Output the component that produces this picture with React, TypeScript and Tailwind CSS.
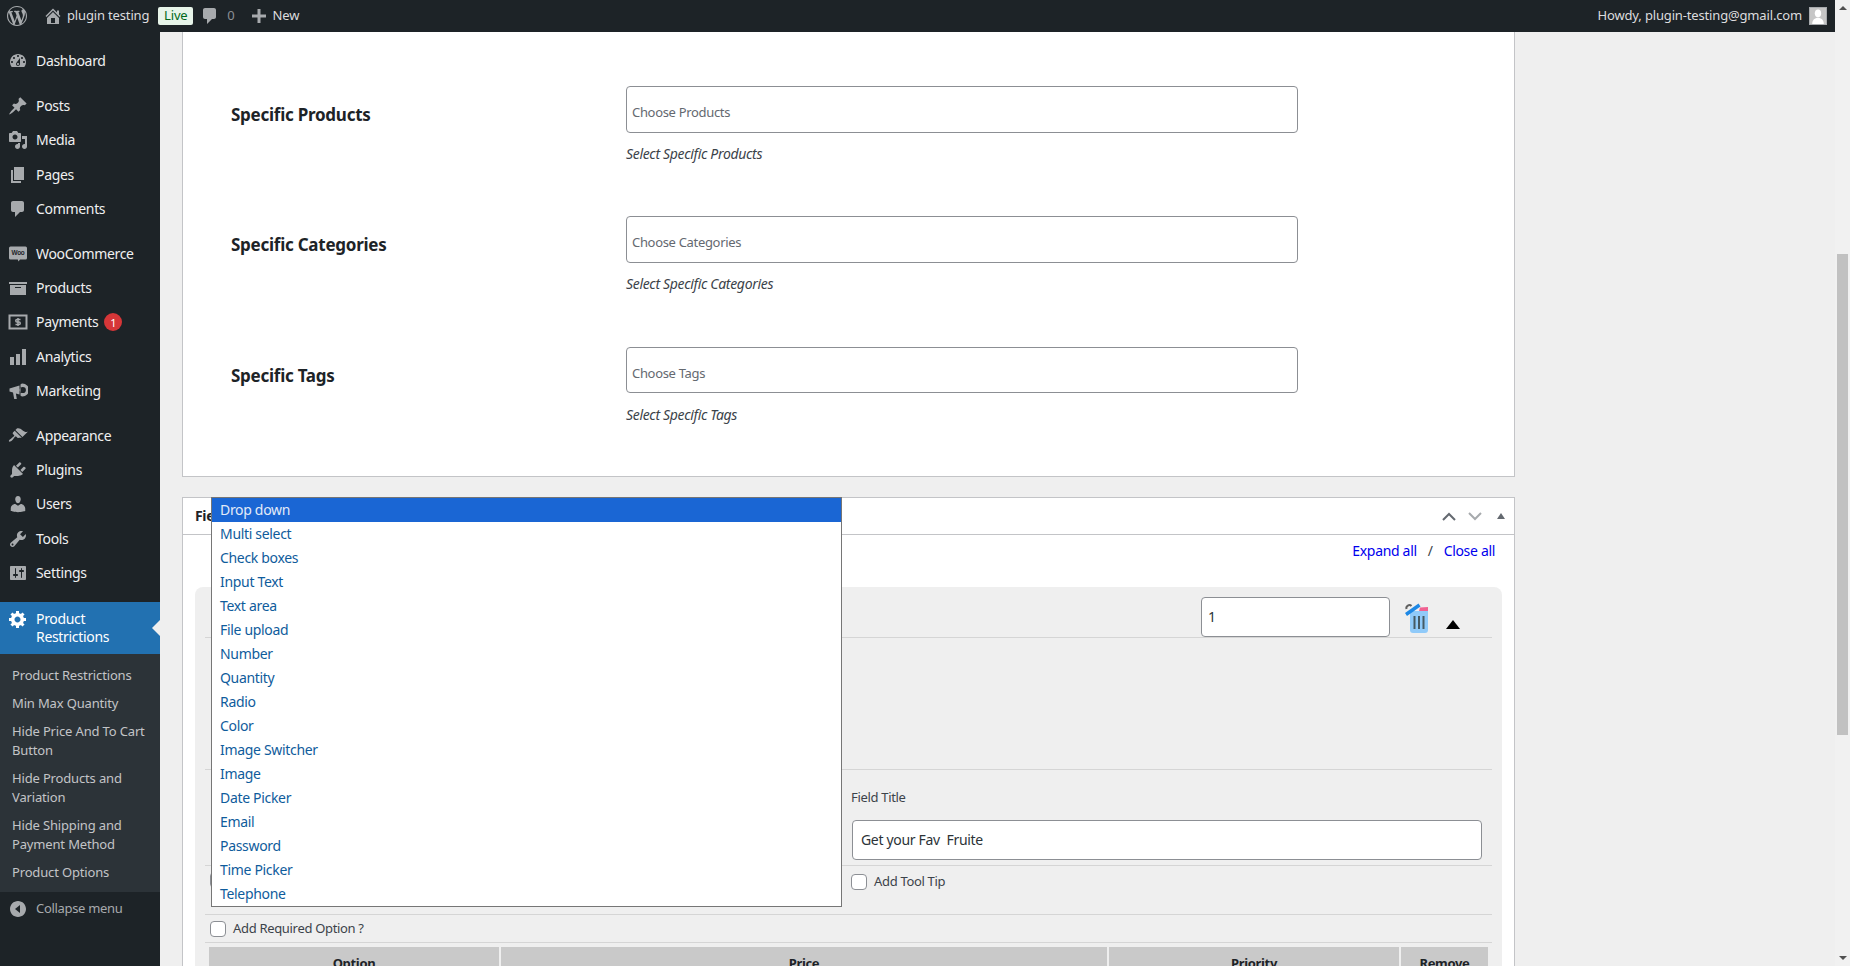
import type { ReactNode } from 'react';

const paths: Record<string, string> = {
  wp: 'M20 10c0-5.51-4.49-10-10-10C4.48 0 0 4.49 0 10c0 5.52 4.48 10 10 10 5.51 0 10-4.48 10-10zM7.78 15.37L4.37 6.22c.55-.02 1.17-.08 1.17-.08.5-.06.44-1.13-.06-1.11 0 0-1.45.11-2.37.11-.18 0-.37 0-.58-.01C4.12 2.69 6.87 1.11 10 1.11c2.33 0 4.45.87 6.05 2.34-.68-.11-1.65.39-1.65 1.58 0 .74.45 1.36.9 2.1.35.61.55 1.36.55 2.46 0 1.49-1.4 5-1.4 5l-3.03-8.37c.54-.02.82-.17.82-.17.5-.05.44-1.25-.06-1.22 0 0-1.44.12-2.38.12-.87 0-2.33-.12-2.33-.12-.5-.03-.56 1.2-.06 1.22l.92.08 1.26 3.41zM17.41 10c.24-.64.74-1.87.43-4.25.7 1.29 1.05 2.71 1.05 4.25 0 3.29-1.73 6.24-4.4 7.78.97-2.59 1.94-5.2 2.92-7.78zM6.1 18.09C3.12 16.65 1.11 13.53 1.11 10c0-1.3.23-2.48.72-3.59C3.25 10.3 4.67 14.2 6.1 18.09zm4.03-6.63l2.58 6.98c-.86.29-1.76.45-2.71.45-.79 0-1.57-.11-2.29-.33.81-2.38 1.62-4.74 2.42-7.1z',
  home: 'M16 8.5l1.53 1.53-1.06 1.06L10 4.62l-6.47 6.47-1.06-1.06L10 2.5l4 4v-2h2v4zm-6-2.46l6 5.99V18H4v-5.97zM12 17v-5H8v5h4z',
  comment: 'M5 2h9c1.1 0 2 .9 2 2v7c0 1.1-.9 2-2 2h-2l-5 5v-5H5c-1.1 0-2-.9-2-2V4c0-1.1.9-2 2-2z',
  plus: 'M17 8.5v3h-5.5V17h-3v-5.5H3v-3h5.5V3h3v5.5z',
  dashboard: 'M3.76 16h12.48c1.1-1.37 1.76-3.11 1.76-5 0-4.42-3.58-8-8-8s-8 3.58-8 8c0 1.89.66 3.63 1.76 5zM10 4c.55 0 1 .45 1 1s-.45 1-1 1-1-.45-1-1 .45-1 1-1zM6 6c.55 0 1 .45 1 1s-.45 1-1 1-1-.45-1-1 .45-1 1-1zm8 0c.55 0 1 .45 1 1s-.45 1-1 1-1-.45-1-1 .45-1 1-1zm-5.37 5.55L12 7v6c0 1.1-.9 2-2 2s-2-.9-2-2c0-.57.24-1.08.63-1.45zM4 10c.55 0 1 .45 1 1s-.45 1-1 1-1-.45-1-1 .45-1 1-1zm12 0c.55 0 1 .45 1 1s-.45 1-1 1-1-.45-1-1 .45-1 1-1zm-5 3c0-.55-.45-1-1-1s-1 .45-1 1 .45 1 1 1 1-.45 1-1z',
  post: 'M10.44 3.02l1.82-1.82 6.36 6.35-1.83 1.82c-1.05-.68-2.48-.57-3.41.36l-.75.75c-.92.93-1.04 2.35-.35 3.41l-1.83 1.82-2.41-2.41-2.8 2.79c-.42.42-3.38 2.71-3.8 2.29s1.86-3.39 2.28-3.81l2.79-2.79L4.1 9.36l1.83-1.82c1.05.69 2.48.57 3.41-.36l.75-.75c.93-.92 1.05-2.35.35-3.41z',
  media: 'M13 11V4c0-.55-.45-1-1-1h-1.67L9 1H5L3.67 3H2c-.55 0-1 .45-1 1v7c0 .55.45 1 1 1h10c.55 0 1-.45 1-1zM7 4.5c1.38 0 2.5 1.12 2.5 2.5S8.38 9.5 7 9.5 4.5 8.38 4.5 7 5.62 4.5 7 4.5zM14 6h5v10.5c0 1.38-1.12 2.5-2.5 2.5S14 17.88 14 16.5s1.12-2.5 2.5-2.5c.17 0 .34.02.5.05V9h-3V6zm-4 8.05V13h2v3.5c0 1.38-1.12 2.5-2.5 2.5S7 17.88 7 16.5 8.12 14 9.5 14c.17 0 .34.02.5.05z',
  page: 'M6 15V2h10v13H6zm-1 1h8v2H3V5h2v11z',
  archive: 'M19 4v2H1V4h18zM2 7h16v10H2V7zm11 3V9H7v1h6z',
  bars: 'M18 18V2h-4v16h4zm-6 0V7H8v11h4zm-6 0v-8H2v8h4z',
  megaphone: 'M1.5 7.5 11.5 4.5v9l-3.6-1 .9 5.5H6.2L5 11.5l-3.5-1zM14.5 2.5a6.5 6.5 0 0 1 0 13 3 3 0 0 1-2-1V3.5a3 3 0 0 1 2-1zm.3 3.4a3.1 3.1 0 1 0 0 6.2 3.1 3.1 0 0 0 0-6.2z',
  appearance: 'M14.48 11.06L7.41 3.99l1.5-1.5c.5-.56 2.3-.47 3.51.32 1.21.8 1.43 1.28 2.91 2.1 1.18.64 2.45 1.26 4.45.85zm-.71.71L6.7 4.7 4.93 6.47c-.39.39-.39 1.02 0 1.41l1.06 1.06c.39.39.39 1.03 0 1.42-.6.6-1.43 1.11-2.21 1.69-.35.26-.7.53-1.01.84C1.43 13.23.4 14.95 1.02 15.56c.54.53 2.33-.48 3.43-1.58.31-.31.58-.66.84-1.02.57-.78 1.09-1.61 1.69-2.21.39-.39 1.02-.39 1.41 0l1.06 1.06c.39.39 1.02.39 1.41 0z',
  plugins: 'M13.11 4.36L9.87 7.6 8 5.73l3.24-3.24c.35-.34 1.05-.2 1.56.32.52.51.66 1.21.31 1.55zm-8 1.77l.91-1.12 9.01 9.01-1.19.84c-.71.71-2.63 1.16-3.82 1.16H6.14L4.9 17.26c-.59.59-1.54.59-2.12 0-.59-.58-.59-1.53 0-2.12l1.24-1.24v-3.88c0-1.13.4-3.19 1.09-3.89zm7.26 3.97l3.24-3.24c.34-.35 1.04-.21 1.55.31.52.51.66 1.21.31 1.55l-3.24 3.25z',
  users: 'M10 9.25c-2.27 0-2.73-3.44-2.73-3.44C7 4.02 7.82 2 9.97 2c2.16 0 2.98 2.02 2.71 3.81 0 0-.41 3.44-2.68 3.44zm0 2.57L12.72 10c2.39 0 4.52 2.33 4.52 4.53v2.49s-3.65 1.13-7.24 1.13c-3.65 0-7.24-1.13-7.24-1.13v-2.49c0-2.25 1.94-4.48 4.47-4.48z',
  tools: 'M16.68 9.77c-1.34 1.34-3.3 1.67-4.95.99l-5.41 6.52c-.99.99-2.59.99-3.58 0s-.99-2.59 0-3.57l6.52-5.42c-.68-1.65-.35-3.61.99-4.95 1.28-1.28 3.12-1.62 4.72-1.06l-2.89 2.89 2.82 2.82 2.86-2.87c.53 1.58.18 3.39-1.08 4.65zM3.81 16.21c.4.39 1.04.39 1.43 0 .4-.4.4-1.04 0-1.43-.39-.4-1.03-.4-1.43 0-.39.39-.39 1.03 0 1.43z',
  settings: 'M18 16V4c0-.55-.45-1-1-1H3c-.55 0-1 .45-1 1v12c0 .55.45 1 1 1h14c.55 0 1-.45 1-1zM8 11h1c.55 0 1 .45 1 1s-.45 1-1 1H8v1.5c0 .28-.22.5-.5.5s-.5-.22-.5-.5V13H6c-.55 0-1-.45-1-1s.45-1 1-1h1V5.5c0-.28.22-.5.5-.5s.5.22.5.5V11zm5-2h-1c-.55 0-1-.45-1-1s.45-1 1-1h1V5.5c0-.28.22-.5.5-.5s.5.22.5.5V7h1c.55 0 1 .45 1 1s-.45 1-1 1h-1v5.5c0 .28-.22.5-.5.5s-.5-.22-.5-.5V9z',
  generic: 'M18 12h-2.18c-.17.7-.44 1.35-.81 1.93l1.54 1.54-2.1 2.1-1.54-1.54c-.58.36-1.23.63-1.91.79V19H8v-2.18c-.68-.16-1.33-.43-1.91-.79l-1.54 1.54-2.12-2.12 1.54-1.54c-.36-.58-.63-1.23-.79-1.91H1V9.03h2.17c.16-.7.44-1.35.8-1.94L2.43 5.55l2.1-2.1 1.54 1.54c.58-.37 1.24-.64 1.93-.81V2h3v2.18c.68.16 1.33.43 1.91.79l1.54-1.54 2.12 2.12-1.54 1.54c.36.59.64 1.24.8 1.94H18V12zm-8.5 1.5c1.66 0 3-1.34 3-3s-1.34-3-3-3-3 1.34-3 3 1.34 3 3 3z',
  collapse: 'M10 2c4.42 0 8 3.58 8 8s-3.58 8-8 8-8-3.58-8-8 3.58-8 8-8zm2 4l-5 4 5 4z',
};

const Dash = ({ name, className }: { name: string; className?: string }) => (
  <svg viewBox="0 0 20 20" className={className} fill="currentColor">
    <path d={paths[name]} />
  </svg>
);

const WooIcon = () => (
  <svg viewBox="0 0 20 20" className="w-5 h-5 text-[#a7aaad]">
    <path d="M2.5 2.5h15a1.5 1.5 0 0 1 1.5 1.5v10a1.5 1.5 0 0 1-1.5 1.5H12l-1.5 2-.7-2H2.5A1.5 1.5 0 0 1 1 14V4a1.5 1.5 0 0 1 1.5-1.5z" fill="currentColor" />
    <text x="10" y="11.2" textAnchor="middle" fontSize="6.4" fontWeight="700" fontFamily="Liberation Sans, sans-serif" fill="#1d2327">Woo</text>
  </svg>
);

const PaymentsIcon = () => (
  <svg viewBox="0 0 20 20" className="w-5 h-5 text-[#a7aaad]" fill="none" stroke="currentColor">
    <rect x="1.5" y="3.5" width="17" height="13" strokeWidth="2" />
    <path d="M12.5 7.5H9a1.25 1.25 0 0 0 0 2.5h2a1.25 1.25 0 0 1 0 2.5H7.5M10 6v8" strokeWidth="1.5" />
  </svg>
);

type NavItem = { label: string; icon: ReactNode; gap?: boolean; badge?: string };

const di = (name: string) => <Dash name={name} className="w-5 h-5 text-[#a7aaad]" />;

const nav: NavItem[] = [
  { label: 'Dashboard', icon: di('dashboard') },
  { label: 'Posts', icon: di('post'), gap: true },
  { label: 'Media', icon: di('media') },
  { label: 'Pages', icon: di('page') },
  { label: 'Comments', icon: di('comment') },
  { label: 'WooCommerce', icon: <WooIcon />, gap: true },
  { label: 'Products', icon: di('archive') },
  { label: 'Payments', icon: <PaymentsIcon />, badge: '1' },
  { label: 'Analytics', icon: di('bars') },
  { label: 'Marketing', icon: di('megaphone') },
  { label: 'Appearance', icon: di('appearance'), gap: true },
  { label: 'Plugins', icon: di('plugins') },
  { label: 'Users', icon: di('users') },
  { label: 'Tools', icon: di('tools') },
  { label: 'Settings', icon: di('settings') },
];

const subItems = [
  'Product Restrictions',
  'Min Max Quantity',
  'Hide Price And To Cart Button',
  'Hide Products and Variation',
  'Hide Shipping and Payment Method',
  'Product Options',
];

const specifics = [
  { label: 'Specific Products', placeholder: 'Choose Products', hint: 'Select Specific Products' },
  { label: 'Specific Categories', placeholder: 'Choose Categories', hint: 'Select Specific Categories' },
  { label: 'Specific Tags', placeholder: 'Choose Tags', hint: 'Select Specific Tags' },
];

const fieldTypes = [
  'Drop down', 'Multi select', 'Check boxes', 'Input Text', 'Text area', 'File upload', 'Number', 'Quantity', 'Radio',
  'Color', 'Image Switcher', 'Image', 'Date Picker', 'Email', 'Password', 'Time Picker', 'Telephone',
];

const Checkbox = () => <span className="block w-4 h-4 shrink-0 rounded-[4px] border border-[#8c8f94] bg-white" />;

const TopBar = () => (
  <header className="h-8 shrink-0 bg-[#1d2327] flex items-center text-[13px] tracking-[-0.012em] text-[#dcdcde]">
    <Dash name="wp" className="w-5 h-5 ml-[7px] text-[#a7aaad]" />
    <Dash name="home" className="w-5 h-5 ml-[16px] text-[#a7aaad]" />
    <span className="ml-[4px]">plugin testing</span>
    <span className="ml-[9px] h-[18px] w-[35px] rounded-[2px] bg-[#e7f4e9] text-[#00691a] flex items-center justify-center">Live</span>
    <Dash name="comment" className="w-5 h-5 ml-[7px] text-[#a7aaad]" />
    <span className="ml-[7px] text-[#8c8f94]">0</span>
    <Dash name="plus" className="w-5 h-5 ml-[14px] text-[#a7aaad]" />
    <span className="ml-[4px]">New</span>
    <span className="ml-auto">Howdy, plugin-testing@gmail.com</span>
    <span className="ml-[7px] mr-2 w-[18px] h-[18px] bg-[#c6c6c6] border border-[#a7aaad] overflow-hidden">
      <svg viewBox="0 0 18 18" className="w-full h-full" fill="#fff">
        <ellipse cx="9" cy="6" rx="3.6" ry="4.4" />
        <path d="M2.5 18c0-4.500 3-7 6.500-7s6.500 2.500 6.500 7z" />
      </svg>
    </span>
  </header>
);

const Sidebar = () => (
  <aside className="w-40 shrink-0 bg-[#1d2327] pt-3 flex flex-col">
    {nav.map((item) => (
      <div
        key={item.label}
        className={`h-[34.2px] flex items-center pl-2 gap-2 text-sm text-[#f0f0f1] ${item.gap ? 'mt-[11px]' : ''}`}
      >
        {item.icon}
        <span>{item.label}</span>
        {item.badge && (
          <span className="-ml-[2px] w-[18px] h-[18px] rounded-full bg-[#d63638] text-white text-[11px] flex items-center justify-center">
            {item.badge}
          </span>
        )}
      </div>
    ))}
    <div className="relative mt-[12px] h-[52px] bg-[#2271b1] text-white text-sm leading-[18px] flex items-center pl-2 gap-2">
      <Dash name="generic" className="w-5 h-5 -mt-[18px] text-white" />
      <span>Product<br />Restrictions</span>
      <span className="absolute right-0 top-[18px] border-y-[8px] border-y-transparent border-r-[8px] border-r-[#efefef]" />
    </div>
    <ul className="bg-[#2c3338] pt-[12px] pb-[11px] px-3 text-[13px] leading-[18.5px] tracking-[-0.012em] text-[#c3c4c7] flex flex-col gap-[9.800px]">
      {subItems.map((s) => (
        <li key={s}>{s}</li>
      ))}
    </ul>
    <div className="flex items-center gap-2 pl-2 h-[34px] text-[13px] text-[#a7aaad]">
      <Dash name="collapse" className="w-5 h-5" />
      <span className="-mt-px">Collapse menu</span>
    </div>
  </aside>
);

const RulesPanel = () => (
  <section className="h-[445px] bg-white border-x border-b border-[#c3c4c7] pt-[54px] pl-[48px]">
    {specifics.map((row) => (
      <div key={row.label} className="h-[130.300px] flex">
        <div className="w-[395px] pt-[16px] text-[17px] tracking-[-0.015em] font-bold text-[#1d2327]">{row.label}</div>
        <div>
          <div className="w-[672px] h-[46.500px] rounded-[4px] border border-[#8c8f94] bg-white pl-[5px] pt-[15px] text-[13px] leading-[20px] text-[#646970]">
            {row.placeholder}
          </div>
          <p className="mt-[12.500px] text-sm leading-[18px] italic text-[#3c434a]">{row.hint}</p>
        </div>
      </div>
    ))}
  </section>
);

const TrashIcon = () => (
  <svg viewBox="0 0 24 31" className="w-6 h-[31px] ml-[14px] mt-[5px]">
    <path d="M6 9h18v19a3 3 0 0 1-3 3H9a3 3 0 0 1-3-3z" fill="#90caf9" />
    <path d="M16 5.500 24 5v4h-9z" fill="#f06292" />
    <path d="M1 11 14.500 1.500l2 3L3 14z" fill="#1e88e5" />
    <path d="M2.500 7a3 3 0 0 1 5-3" fill="none" stroke="#616161" strokeWidth="2" />
    <path d="M10.500 14v13M15 14v13M19.500 14v13" stroke="#455a64" strokeWidth="2" />
  </svg>
);

const FieldsPanel = () => (
  <section className="relative mt-5 bg-white border-x border-t border-[#c3c4c7] text-[13px] text-[#3c434a]">
    <div className="h-[37px] border-b border-[#c3c4c7] flex items-center pl-3 pr-[9px]">
      <span className="text-sm font-bold text-[#1d2327]">Field</span>
      <span className="ml-auto flex items-center gap-[12px] text-[#646970]">
        <svg viewBox="0 0 14 9" className="w-[14px] h-[9px]" fill="none" stroke="currentColor" strokeWidth="2"><path d="M1 8l6-6 6 6" /></svg>
        <svg viewBox="0 0 14 9" className="w-[14px] h-[9px] text-[#a7aaad]" fill="none" stroke="currentColor" strokeWidth="2"><path d="M1 1l6 6 6-6" /></svg>
        <svg viewBox="0 0 8 6" className="w-2 h-[6px] ml-[3px]" fill="currentColor"><path d="M0 6l4-6 4 6z" /></svg>
      </span>
    </div>
    <div className="h-[52px] flex justify-end items-start pt-[6px] pr-[19px] text-sm text-[#0000ee]">
      <span>Expand all</span>
      <span className="mx-[11px] text-[#3c434a]">/</span>
      <span>Close all</span>
    </div>
    <div className="mx-3 rounded-t-lg bg-[#efefef] px-[10px] pb-5">
      <div className="h-[51px] pt-[10px] border-b border-[#d5d5d5] flex justify-end items-start pr-[32px]">
        <div className="w-[189px] h-[40px] rounded-[4px] border border-[#8c8f94] bg-white pl-[6px] flex items-center text-sm text-[#2c3338]">1</div>
        <TrashIcon />
        <span className="ml-[18px] mt-[23px] w-0 h-0 border-x-[7px] border-x-transparent border-b-[9px] border-b-black" />
      </div>
      <div className="h-[132px] border-b border-[#d5d5d5]" />
      <div className="h-[96px] border-b border-[#d5d5d5] pl-[646px] pt-[18px]">
        <div className="leading-[18px] pr-[10px]">Field Title</div>
        <div className="ml-px mt-[14px] w-[630px] h-10 rounded-[4px] border border-[#8c8f94] bg-white pl-[8px] flex items-center text-sm text-[#2c3338] whitespace-pre">
          Get your Fav  Fruite
        </div>
      </div>
      <div className="h-[49px] border-b border-[#d5d5d5] flex items-start pt-[6px] pl-[5px]">
        <Checkbox />
        <div className="ml-[625px] flex items-center gap-[7px]">
          <Checkbox />
          <span>Add Tool Tip</span>
        </div>
      </div>
      <div className="h-[28px] border-b border-[#d5d5d5] flex items-center gap-[7px] pl-[5px]">
        <Checkbox />
        <span>Add Required Option ?</span>
      </div>
      <div className="mt-[4px] mx-[4px] grid grid-cols-[290px_606px_290px_87px] gap-[2px] text-[13px] font-bold text-[#1d2327]">
        {['Option', 'Price', 'Priority', 'Remove'].map((h) => (
          <div key={h} className="h-[40px] bg-[#c9c9c9] flex justify-center pt-[7px]">{h}</div>
        ))}
      </div>
    </div>
    <ul className="absolute -top-px left-[28px] w-[631px] bg-white border border-[#767676] text-sm text-[#0f5c9c]">
      {fieldTypes.map((t, i) => (
        <li key={t} className={`h-6 pl-2 flex items-center ${i === 0 ? 'bg-[#1a66d4] text-[#e3ebf8]' : ''}`}>{t}</li>
      ))}
    </ul>
  </section>
);

export default function App() {
  return (
    <div className="flex w-[1850px] h-[966px] overflow-hidden bg-[#efefef] font-['Noto_Sans',sans-serif] tracking-[-0.02em]">
      <div className="flex-1 min-w-0 flex flex-col">
        <TopBar />
        <div className="flex-1 min-h-0 flex">
          <Sidebar />
          <main className="flex-1 min-w-0 pl-[22px] pr-[320px]">
            <RulesPanel />
            <FieldsPanel />
          </main>
        </div>
      </div>
      <div className="w-[15px] shrink-0 bg-[#f1f1f1] flex flex-col items-center">
        <span className="mt-[6px] w-0 h-0 border-x-[4px] border-x-transparent border-b-[4px] border-b-[#505050]" />
        <span className="mt-[244px] h-[481px] w-[11px] bg-[#c1c1c1]" />
        <span className="mt-auto mb-[6px] w-0 h-0 border-x-[4px] border-x-transparent border-t-[4px] border-t-[#505050]" />
      </div>
    </div>
  );
}
